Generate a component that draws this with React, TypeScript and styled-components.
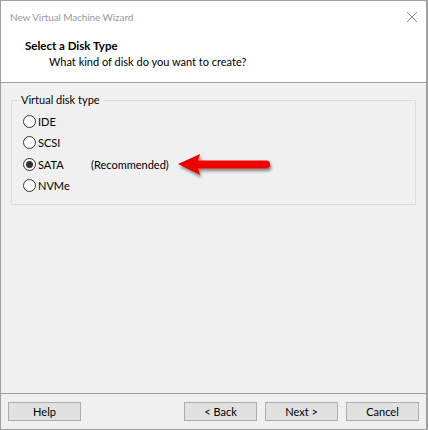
import React from "react";
import styled, { createGlobalStyle } from "styled-components";

const Global = createGlobalStyle`
  html, body { margin: 0; padding: 0; background: #ffffff; }
  body { font-family: "Lato", "Noto Sans", "Liberation Sans", sans-serif; font-size: 11px; color: #000; }
  * { box-sizing: border-box; }
`;

const Window = styled.div`
  width: 428px;
  height: 430px;
  border: 1px solid #a0a0a0;
  border-right-width: 2px;
  display: flex;
  flex-direction: column;
  background: #f0f0f0;
  overflow: hidden;
`;

const TitleBar = styled.div`
  height: 31px;
  background: #ffffff;
  display: flex;
  align-items: center;
  justify-content: space-between;
  padding: 0 8px 0 9px;
`;

const TitleText = styled.span`
  color: #999999;
  font-size: 10px;
  letter-spacing: -0.1px;
`;

const Header = styled.div`
  height: 51px;
  background: #ffffff;
  border-bottom: 1px solid #a0a0a0;
  display: flex;
  flex-direction: column;
  padding: 6px 0 0 24px;
`;

const HeaderTitle = styled.div`
  font-weight: bold;
  font-size: 11.5px;
  line-height: 16px;
`;

const HeaderSub = styled.div`
  font-size: 11px;
  line-height: 16px;
  padding-left: 24px;
`;

const Body = styled.div`
  flex: 1;
  padding: 10px 10px 0 10px;
`;

const Group = styled.fieldset`
  margin: 0;
  border: 1px solid #dcdcdc;
  padding: 4px 0 6px 11px;
  height: 112px;
  display: flex;
  flex-direction: column;
`;

const Legend = styled.legend`
  padding: 0 3px 0 2px;
  margin-left: -4px;
  font-size: 11px;
  line-height: 14px;
`;

const RadioRow = styled.label`
  display: flex;
  align-items: center;
  height: 21.3px;
  font-size: 11px;
`;

const RadioCircle = styled.span<{ $checked?: boolean }>`
  width: 13px;
  height: 13px;
  border-radius: 50%;
  border: 1px solid #333333;
  background: #ffffff;
  display: flex;
  align-items: center;
  justify-content: center;
  margin-right: 2px;
  &::after {
    content: "";
    width: 7px;
    height: 7px;
    border-radius: 50%;
    background: ${(p) => (p.$checked ? "#333333" : "transparent")};
  }
`;

const RadioLabel = styled.span`
  width: 53px;
`;

const Note = styled.span`
  display: flex;
  align-items: center;
`;

const Arrow = styled.svg`
  margin-left: 8px;
  margin-top: 3px;
`;

const Footer = styled.div`
  border-top: 1px solid #a0a0a0;
  height: 36px;
  display: flex;
  align-items: flex-start;
  padding: 8px 7px 0 7px;
  gap: 8px;
`;

const Spacer = styled.div`
  flex: 1;
`;

const Button = styled.button`
  width: 73px;
  height: 19px;
  background: #e1e1e1;
  border: 1px solid #adadad;
  font-family: inherit;
  font-size: 11px;
  color: #000;
  padding: 0;
  line-height: 17px;
`;

export default function App() {
  return (
    <>
      <Global />
      <Window>
        <TitleBar>
          <TitleText>New Virtual Machine Wizard</TitleText>
          <svg width="12" height="12" viewBox="0 0 12 12">
            <path d="M1 1 L11 11 M11 1 L1 11" stroke="#8a8a8a" strokeWidth="1" />
          </svg>
        </TitleBar>
        <Header>
          <HeaderTitle>Select a Disk Type</HeaderTitle>
          <HeaderSub>What kind of disk do you want to create?</HeaderSub>
        </Header>
        <Body>
          <Group>
            <Legend>Virtual disk type</Legend>
            <RadioRow>
              <RadioCircle />
              <RadioLabel>IDE</RadioLabel>
            </RadioRow>
            <RadioRow>
              <RadioCircle />
              <RadioLabel>SCSI</RadioLabel>
            </RadioRow>
            <RadioRow>
              <RadioCircle $checked />
              <RadioLabel>SATA</RadioLabel>
              <Note>
                (Recommended)
                <Arrow width="100" height="30" viewBox="0 0 100 30">
                  <defs>
                    <filter id="sh" x="-20%" y="-50%" width="140%" height="200%">
                      <feDropShadow dx="1.5" dy="2.5" stdDeviation="1.8" floodColor="#000" floodOpacity="0.45" />
                    </filter>
                  </defs>
                  <g filter="url(#sh)">
                    <path d="M1 13 L23 3 L21 9.5 L89 9.5 Q93 9.5 93 13.5 Q93 17.5 89 17.5 L21 17.5 L23 24 Z" fill="#f00000" />
                  </g>
                </Arrow>
              </Note>
            </RadioRow>
            <RadioRow>
              <RadioCircle />
              <RadioLabel>NVMe</RadioLabel>
            </RadioRow>
          </Group>
        </Body>
        <Footer>
          <Button>Help</Button>
          <Spacer />
          <Button>&lt; Back</Button>
          <Button>Next &gt;</Button>
          <Button>Cancel</Button>
        </Footer>
      </Window>
    </>
  );
}
